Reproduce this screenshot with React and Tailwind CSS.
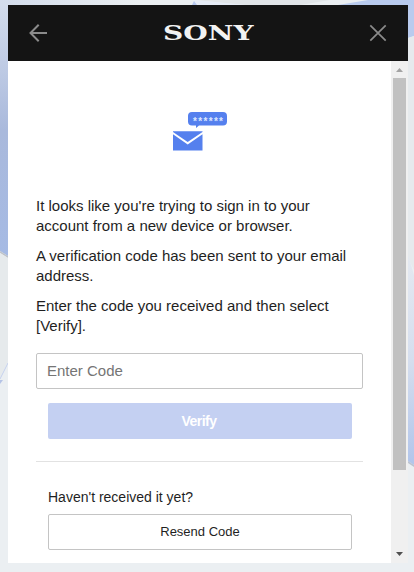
import { useState } from 'react';

const messages = [
  "It looks like you're trying to sign in to your account from a new device or browser.",
  'A verification code has been sent to your email address.',
  'Enter the code you received and then select [Verify].'
];

function Backdrop() {
  return (
    <svg className="absolute inset-0 -z-10" width="414" height="572" viewBox="0 0 414 572">
      <defs>
        <linearGradient id="leftBand" x1="0" y1="0" x2="0" y2="1">
          <stop offset="0" stopColor="#d3dcec" />
          <stop offset="0.5" stopColor="#a9b9dc" />
          <stop offset="1" stopColor="#a5bae4" />
        </linearGradient>
        <linearGradient id="topBand" x1="0" y1="0" x2="1" y2="0">
          <stop offset="0" stopColor="#d3dcec" />
          <stop offset="1" stopColor="#ebeff1" />
        </linearGradient>
        <linearGradient id="rightBand" x1="0" y1="0" x2="0" y2="1">
          <stop offset="0" stopColor="#e4e9f1" />
          <stop offset="0.5" stopColor="#d5deee" />
          <stop offset="1" stopColor="#b1c5eb" />
        </linearGradient>
      </defs>
      <rect width="414" height="572" fill="#ebeff2" />
      <rect width="140" height="5" fill="url(#topBand)" />
      <path d="M0 5H8V256L0 251Z" fill="url(#leftBand)" />
      <path d="M0 251L8 256V258L0 253Z" fill="#bfc3c9" />
      <path d="M0 253L8 258V362L0 378Z" fill="#e6eaec" />
      <path d="M0 379L8 363" stroke="#c5d1ee" />
      <path d="M0 380H3L0 384Z" fill="#b5c3e6" />
      <path d="M195 0H330L300 5H245Z" fill="#e1e5e8" />
      <path d="M195 0L245 5H192Z" fill="#e6ecf6" />
      <path d="M192 5L194 1L197 5Z" fill="#b7c8ef" />
      <path d="M368 0H414V36L408 38V5H338Z" fill="#b9cbee" />
      <path d="M408 38L414 36V270L408 258Z" fill="#e6eaed" />
      <path d="M408 255L414 275V465L408 461Z" fill="url(#rightBand)" />
      <path d="M408 461L414 465V467L408 463Z" fill="#bbc3d2" />
    </svg>
  );
}

function Header() {
  return (
    <header className="flex h-14 shrink-0 items-center justify-between bg-[#141414] pr-[21px] pl-5">
      <button aria-label="Back" className="flex size-5">
        <svg width="20" height="20" viewBox="0 0 20 20" fill="none" stroke="#8b8b8b" strokeWidth="2">
          <path d="M19 10H2.5M10.7 1.7L2.5 10L10.7 18.3" />
        </svg>
      </button>
      <svg width="96" height="32" viewBox="0 0 96 32" aria-label="SONY" className="overflow-visible">
        <text
          x="2"
          y="23"
          textLength="90.5"
          lengthAdjust="spacingAndGlyphs"
          fill="#f2f2f2"
          className="font-['DejaVu_Serif',serif] text-[20px] font-bold"
        >
          SONY
        </text>
      </svg>
      <button aria-label="Close" className="flex size-[18px]">
        <svg width="18" height="18" viewBox="0 0 18 18" fill="none" stroke="#8b8b8b" strokeWidth="1.7">
          <path d="M1.3 1.3L16.7 16.7M16.7 1.3L1.3 16.7" />
        </svg>
      </button>
    </header>
  );
}

function MailIcon() {
  return (
    <svg width="56" height="40" viewBox="0 0 56 40" className="ml-[136px]" fill="#5580ee">
      <path d="M19 0H51Q55 0 55 4V9.500Q55 13.500 51 13.500H27L24 16V13.500H20Q16 13.500 16 9.500V4Q16 0 20 0Z" />
      <text
        x="21"
        y="12.500"
        textLength="30"
        fill="#dce6ff"
        className="font-['Liberation_Sans',sans-serif] text-[10px] font-bold"
      >
        ******
      </text>
      <path d="M1 19.200H30.500V20L15.700 30L1 20Z" />
      <path d="M1 22.200L15.700 32.500L30.500 22.200V38.500H1Z" />
    </svg>
  );
}

function Scrollbar() {
  return (
    <div className="flex w-[17px] shrink-0 flex-col items-center bg-[#f0f0f0]">
      <svg width="17" height="17" viewBox="0 0 17 17" fill="#a3a3a3">
        <path d="M5 11L8.500 7L12 11Z" />
      </svg>
      <div className="h-[392px] w-[13px] bg-[#c1c1c1]" />
      <svg width="17" height="17" viewBox="0 0 17 17" fill="#505050" className="mt-auto">
        <path d="M5 6H12L8.500 10Z" />
      </svg>
    </div>
  );
}

export default function App() {
  const [code, setCode] = useState('');

  return (
    <div className="relative isolate h-[572px] w-[414px] overflow-hidden px-2 pt-[5px] font-['Liberation_Sans',Arial,sans-serif] text-[#1f1f1f]">
      <Backdrop />
      <div className="flex h-[558px] w-[400px] flex-col overflow-hidden">
        <Header />
        <div className="flex min-h-0 flex-1 bg-white">
          <main className="w-[383px] shrink-0 px-7 pt-[51px]">
            <MailIcon />
            <div className="mt-11 space-y-2.5 text-[15px] leading-5">
              {messages.map(message => (
                <p key={message}>{message}</p>
              ))}
            </div>

            <input
              value={code}
              onChange={e => setCode(e.target.value)}
              placeholder="Enter Code"
              className="mt-[17px] block h-9 w-[327px] rounded-[2px] border border-[#c4c4c4] px-2.5 pb-0.5 text-[15px] outline-none placeholder:text-[#757575]"
            />
            <div className="px-3">
              <button
                disabled={!code}
                className="mt-3.5 block h-9 w-[304px] rounded-[2px] bg-[#c4d0f2] pr-0.5 text-sm font-bold tracking-[-0.5px] text-white"
              >
                Verify
              </button>
            </div>

            <hr className="mt-[22px] w-[327px] border-[#e2e2e2]" />

            <div className="px-3 pt-[25px]">
              <p className="text-sm leading-5">Haven't received it yet?</p>
              <button className="mt-[7px] block h-9 w-[304px] rounded-[2px] border border-[#c4c4c4] text-[13px]">
                Resend Code
              </button>
            </div>
          </main>
          <Scrollbar />
        </div>
      </div>
    </div>
  );
}
